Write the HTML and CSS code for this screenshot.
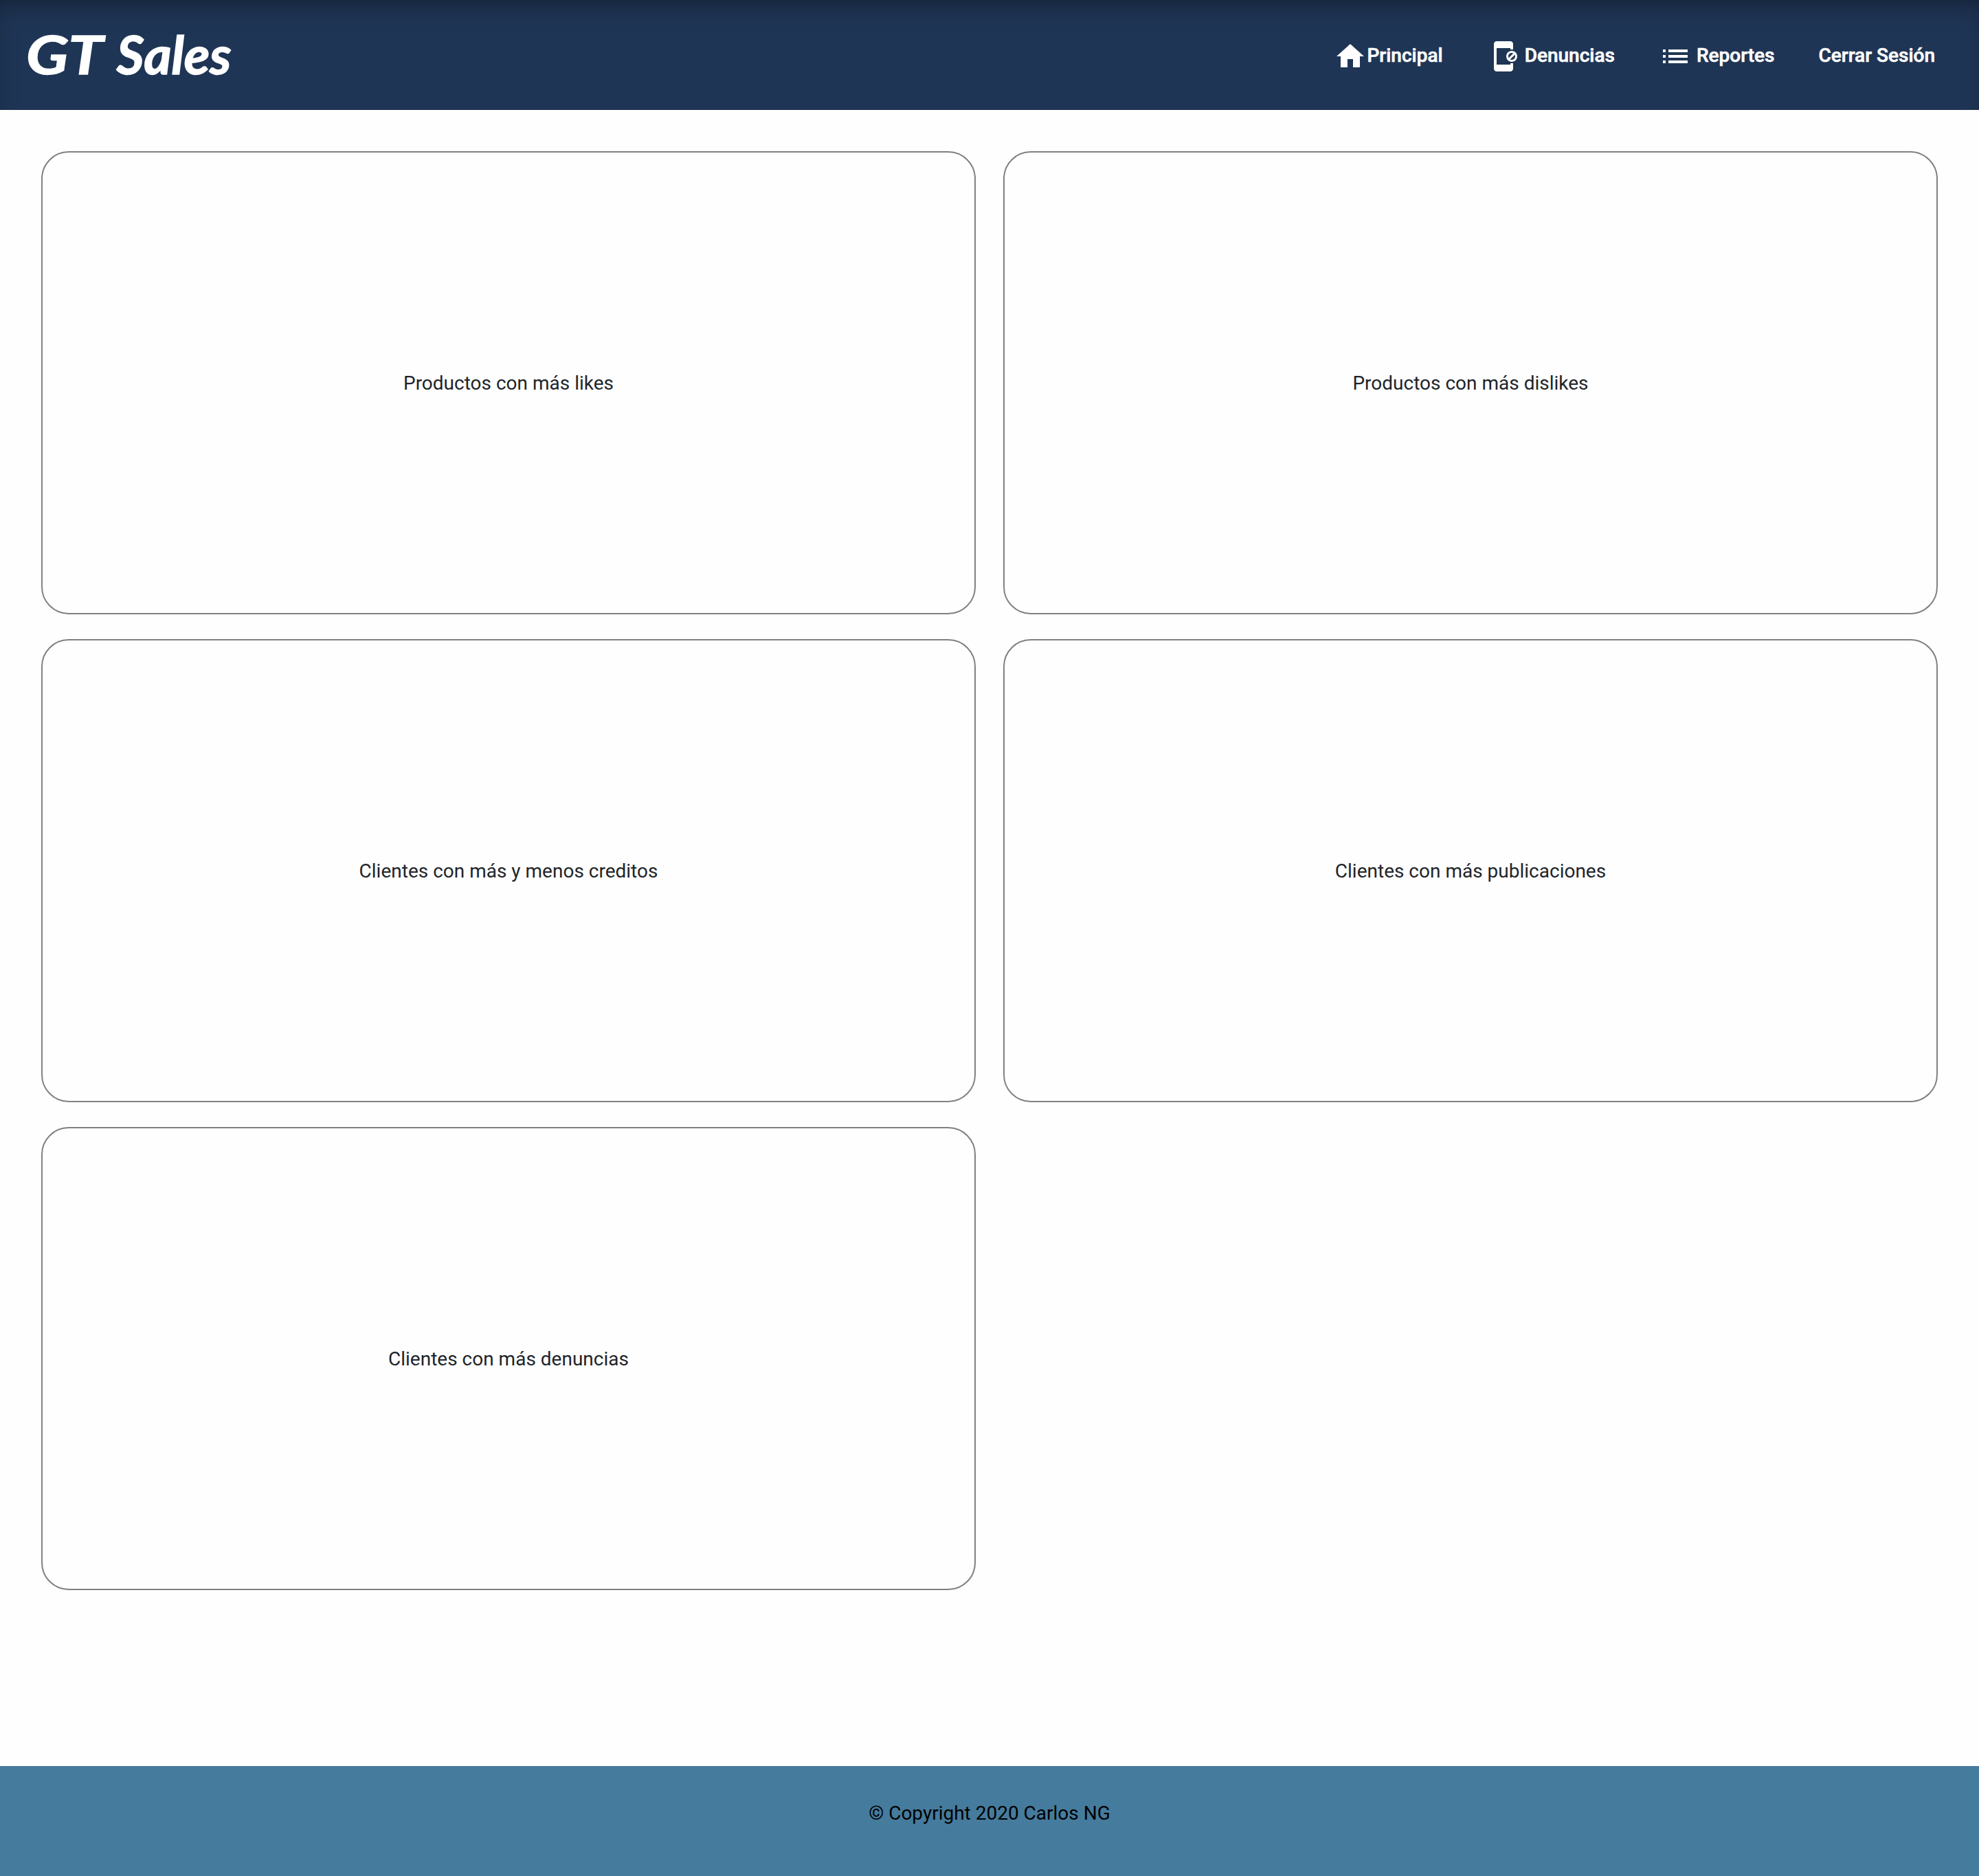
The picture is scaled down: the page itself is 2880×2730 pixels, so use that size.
FILE: index.html
```html
<!DOCTYPE html>
<html lang="es">
<head>
<meta charset="utf-8">
<title>GT Sales</title>
<link rel="stylesheet" href="styles.css">
</head>
<body>
<header class="topbar">
  <h1 class="brand"><span class="brand-wide">GT</span> Sales</h1>
  <nav class="menu">
    <a class="menu-item"><svg class="icon" viewBox="0 0 24 24"><path d="M10 20v-6h4v6h5v-8h3L12 3 2 12h3v8z"/></svg>Principal</a>
    <a class="menu-item spaced"><svg class="icon" viewBox="0 0 24 24"><path d="M18 8c-2.21 0-4 1.79-4 4s1.79 4 4 4 4-1.79 4-4-1.79-4-4-4zm-2.5 4c0-1.38 1.12-2.5 2.5-2.5.42 0 .8.11 1.15.29l-3.36 3.36c-.18-.35-.29-.73-.29-1.15zm2.5 2.5c-.42 0-.8-.11-1.15-.29l3.36-3.36c.18.35.29.73.29 1.15 0 1.38-1.12 2.5-2.5 2.5z"/><path d="M17 18H7V6h10v1h2V3c0-1.1-.9-2-2-2H7c-1.1 0-2 .9-2 2v18c0 1.1.9 2 2 2h10c1.1 0 2-.9 2-2v-4h-2v1z"/></svg>Denuncias</a>
    <a class="menu-item spaced"><svg class="icon" viewBox="0 0 24 24"><path d="M3 13h2v-2H3v2zm0 4h2v-2H3v2zm0-8h2V7H3v2zm4 4h14v-2H7v2zm0 4h14v-2H7v2zM7 7v2h14V7H7z"/></svg>Reportes</a>
    <a class="menu-item">Cerrar Sesión</a>
  </nav>
</header>
<main class="reports">
  <section class="card">Productos con más likes</section>
  <section class="card">Productos con más dislikes</section>
  <section class="card">Clientes con más y menos creditos</section>
  <section class="card">Clientes con más publicaciones</section>
  <section class="card">Clientes con más denuncias</section>
</main>
<footer class="footer">© Copyright 2020 Carlos NG</footer>
</body>
</html>
```
FILE: styles.css
```css
* { box-sizing: border-box; }
body {
  margin: 0;
  min-height: 2730px;
  display: flex;
  flex-direction: column;
  background: #fefefe;
  color: #212529;
  font-family: Roboto, sans-serif;
  font-size: 28px;
}
.topbar {
  height: 160px;
  padding: 0 64px 0 38px;
  display: flex;
  align-items: center;
  justify-content: space-between;
  background: #1f3555;
  color: #fff;
  box-shadow: inset 0 20px 40px -20px rgba(0, 0, 0, .5);
}
.brand {
  margin: 0;
  padding-bottom: 4px;
  font: italic 700 77px/1 Lato, sans-serif;
  -webkit-text-stroke: 1.5px #fff;
}
.brand-wide {
  display: inline-block;
  margin-right: 20px;
  transform: scaleX(1.18);
  transform-origin: left;
}
.menu {
  display: flex;
  align-items: center;
  gap: 64px;
}
.menu-item {
  display: flex;
  align-items: center;
  padding-top: 2px;
  font-weight: 500;
  line-height: 48px;
  -webkit-text-stroke: .6px #fff;
}
.icon {
  width: 48px;
  height: 48px;
  margin-top: 2px;
  fill: currentColor;
}
.spaced .icon { margin-right: 7px; }
.reports {
  flex: 1;
  padding: 60px;
  display: grid;
  grid-template-columns: 1fr 1fr;
  grid-auto-rows: 674px;
  gap: 36px 40px;
  align-content: start;
}
.card {
  display: flex;
  align-items: center;
  justify-content: center;
  padding-top: 1px;
  border: 2px solid #808080;
  border-radius: 40px;
}
.footer {
  height: 160px;
  padding-top: 52px;
  background: #457b9d;
  color: #000;
  line-height: 33px;
  text-align: center;
}
```
